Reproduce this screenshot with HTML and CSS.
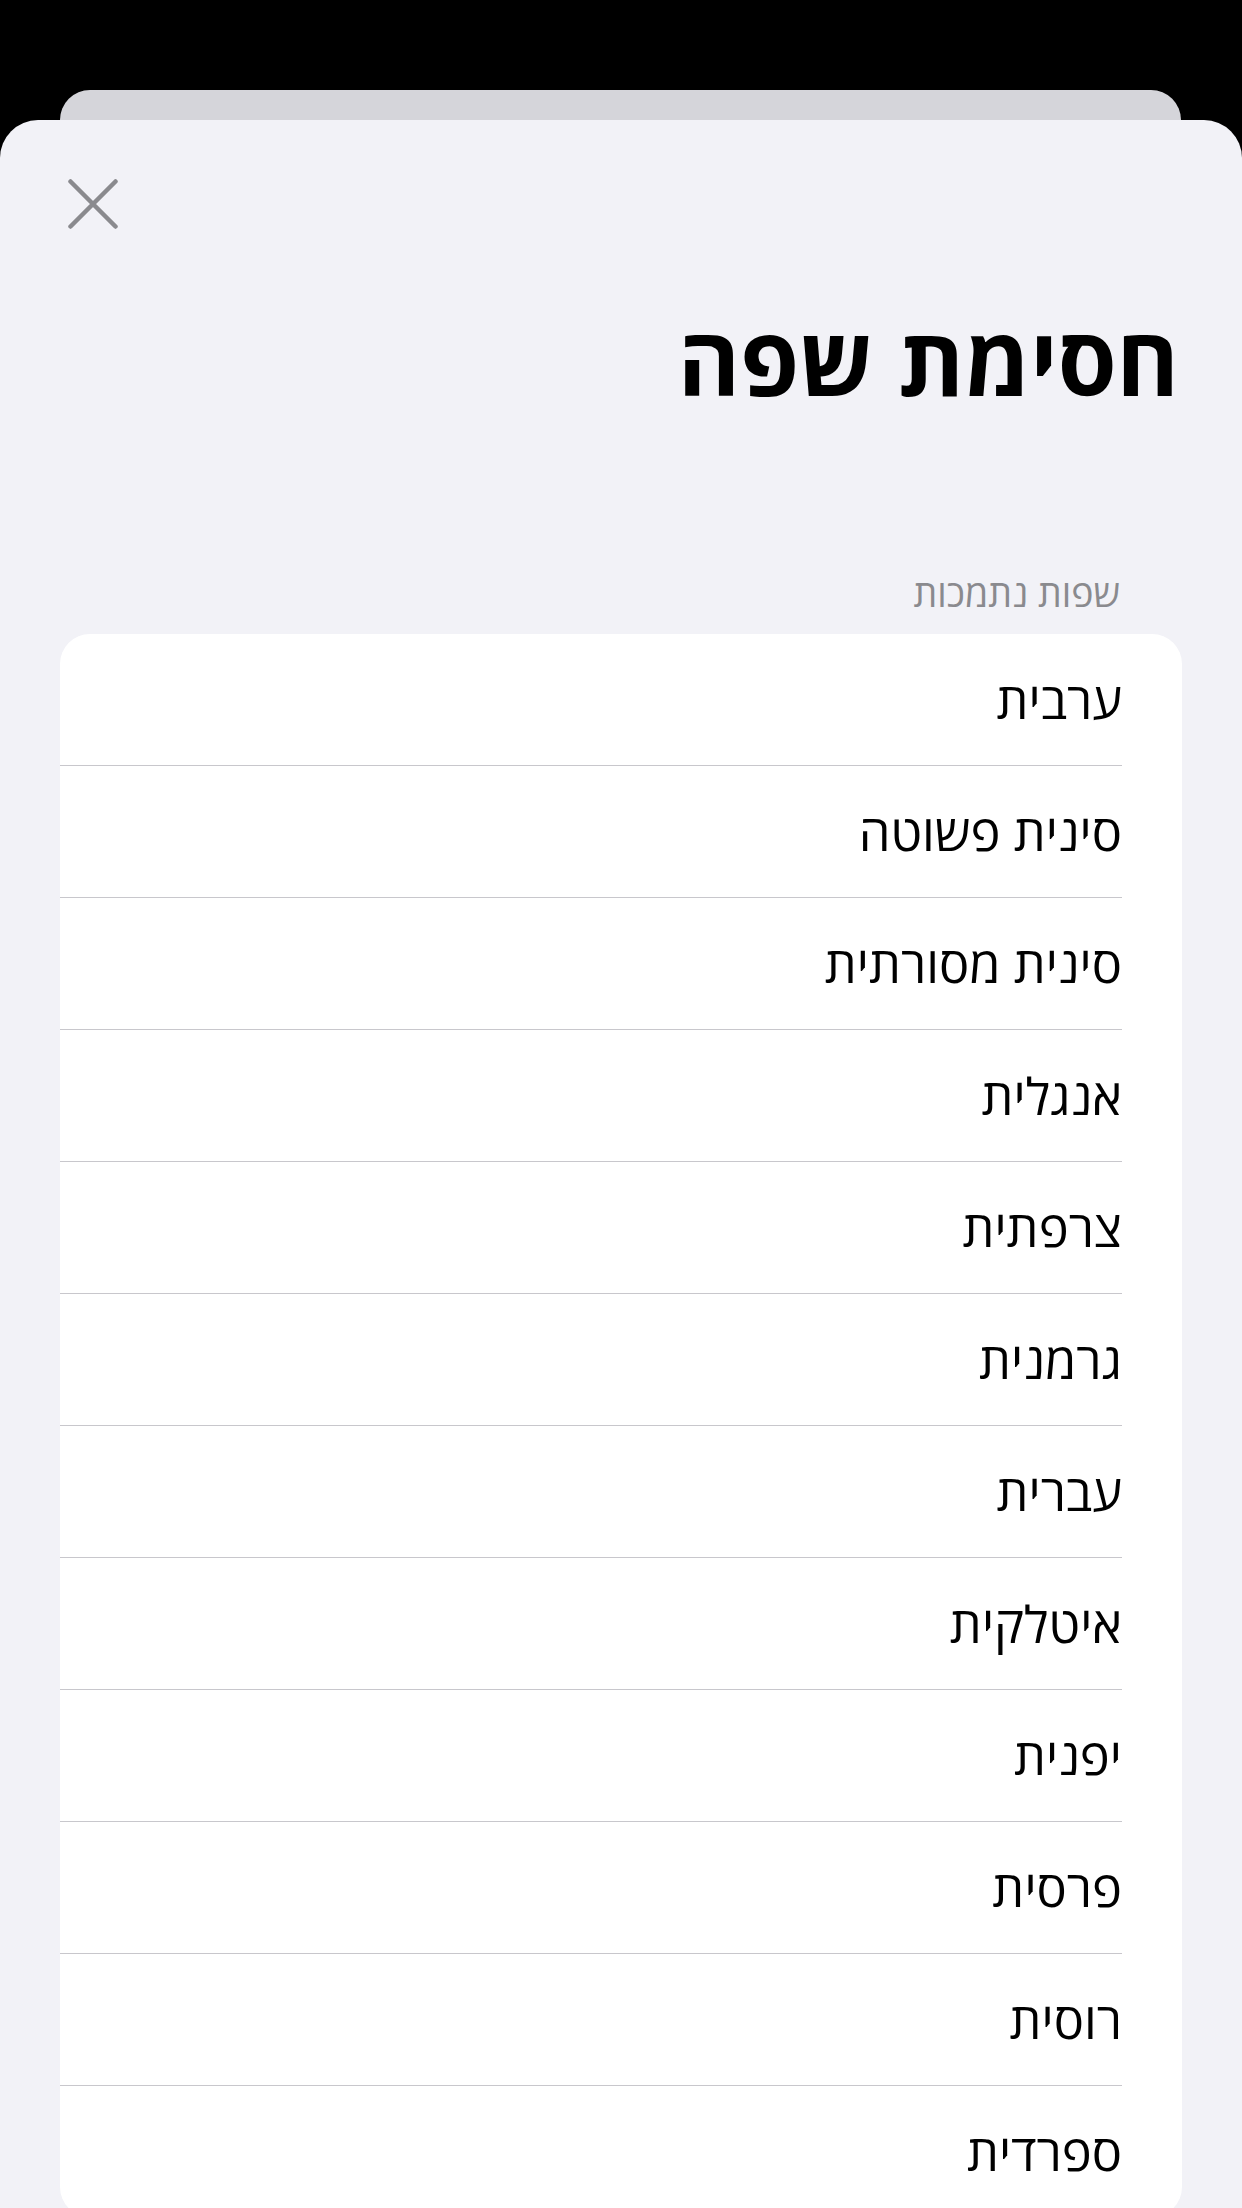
FILE: index.html
```html
<!DOCTYPE html>
<html lang="he">
<head>
<meta charset="utf-8">
<title>חסימת שפה</title>
<link rel="stylesheet" href="styles.css">
</head>
<body>
<div class="screen">
  <div class="backcard"></div>
  <div class="sheet" dir="rtl">
    <div class="toolbar">
      <button class="close" aria-label="סגירה">
        <svg width="50" height="50" viewBox="0 0 50 50"><path d="M2.5 2.5 L47.5 47.5 M47.5 2.5 L2.5 47.5" stroke="#8a8a8e" stroke-width="4.5" stroke-linecap="round" fill="none"/></svg>
      </button>
    </div>
    <h1 class="title">חסימת שפה</h1>
    <div class="section-header">שפות נתמכות</div>
    <ul class="list">
      <li class="row"><span>ערבית</span></li>
      <li class="row"><span>סינית פשוטה</span></li>
      <li class="row"><span>סינית מסורתית</span></li>
      <li class="row"><span>אנגלית</span></li>
      <li class="row"><span>צרפתית</span></li>
      <li class="row"><span>גרמנית</span></li>
      <li class="row"><span>עברית</span></li>
      <li class="row"><span>איטלקית</span></li>
      <li class="row"><span>יפנית</span></li>
      <li class="row"><span>פרסית</span></li>
      <li class="row"><span>רוסית</span></li>
      <li class="row"><span>ספרדית</span></li>
    </ul>
  </div>
</div>
</body>
</html>
```
FILE: styles.css
```css
html, body {
  margin: 0;
  padding: 0;
  background: #000;
}
.screen {
  width: 1242px;
  height: 2208px;
  overflow: hidden;
  background: #000;
  padding-top: 90px;
  box-sizing: border-box;
  display: flex;
  flex-direction: column;
  font-family: "Open Sans", "Liberation Sans", "DejaVu Sans", sans-serif;
}
.backcard {
  height: 30px;
  margin: 0 61px 0 60px;
  background: #d5d5da;
  border-radius: 32px 32px 0 0;
  flex: none;
}
.sheet {
  flex: 1;
  background: #f2f2f7;
  border-radius: 38px 38px 0 0;
  display: flex;
  flex-direction: column;
}
.toolbar {
  display: flex;
  justify-content: flex-end;
  padding: 59px 0 0 68px;
  height: 50px;
}
.close {
  width: 50px;
  height: 50px;
  padding: 0;
  border: 0;
  background: none;
  display: block;
}
.close svg { display: block; }
.title {
  margin: 69px 0 0 0;
  padding: 0 63px 0 0;
  font-size: 95px;
  line-height: 122px;
  font-weight: 700;
  color: #000;
}
.section-header {
  margin-top: 149px;
  padding-right: 122px;
  font-size: 37.5px;
  line-height: 47px;
  color: #8a8a8e;
}
.list {
  list-style: none;
  margin: 18px 60px 0 60px;
  padding: 0;
  background: #fff;
  border-radius: 30px;
  overflow: hidden;
}
.row {
  height: 131px;
  margin-right: 60px;
  border-bottom: 1px solid #c8c7cc;
  display: flex;
  align-items: center;
  font-size: 50.5px;
  color: #000;
}
.row:last-child { border-bottom: 0; }
```
